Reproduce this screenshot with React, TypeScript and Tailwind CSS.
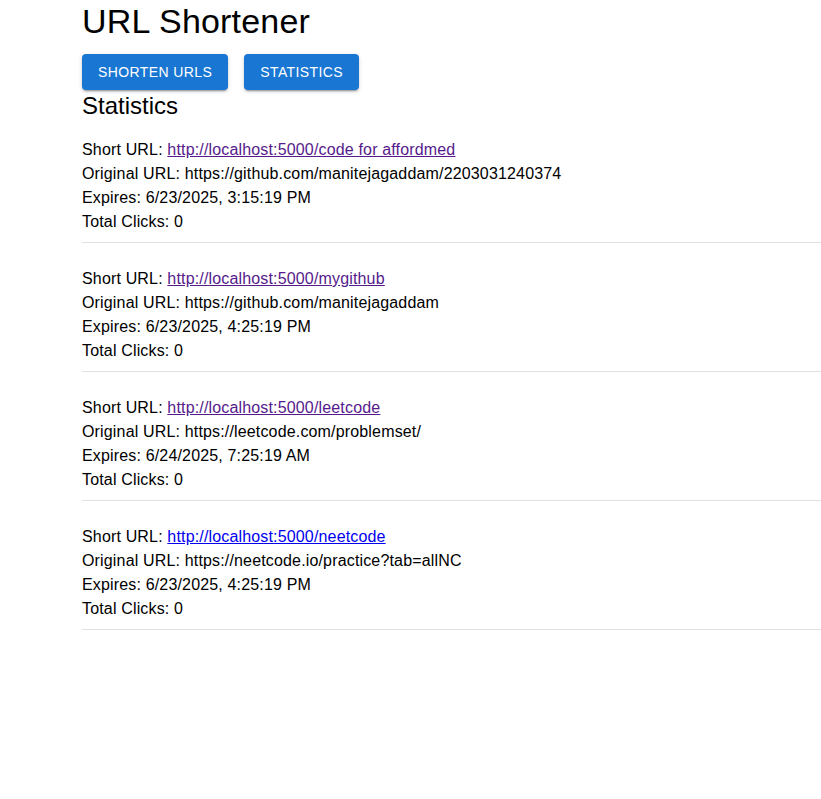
const urls = [
  {
    short: "http://localhost:5000/code for affordmed",
    original: "https://github.com/manitejagaddam/2203031240374",
    expires: "6/23/2025, 3:15:19 PM",
    clicks: 0,
    visited: true,
  },
  {
    short: "http://localhost:5000/mygithub",
    original: "https://github.com/manitejagaddam",
    expires: "6/23/2025, 4:25:19 PM",
    clicks: 0,
    visited: true,
  },
  {
    short: "http://localhost:5000/leetcode",
    original: "https://leetcode.com/problemset/",
    expires: "6/24/2025, 7:25:19 AM",
    clicks: 0,
    visited: true,
  },
  {
    short: "http://localhost:5000/neetcode",
    original: "https://neetcode.io/practice?tab=allNC",
    expires: "6/23/2025, 4:25:19 PM",
    clicks: 0,
    visited: false,
  },
];

const App = () => {
  return (
    <div className="min-h-[799px] bg-white pl-[82px] text-black font-['Liberation_Sans',Arial,sans-serif]">
      <h1 className="text-[34px] leading-[42px] font-normal tracking-[0.2px] mb-[12px]">URL Shortener</h1>

      <div className="flex gap-4">
        <button className="h-[36px] px-4 rounded bg-[#1976d2] text-white text-[14px] font-medium tracking-[0.4px] uppercase shadow-[0_3px_1px_-2px_rgba(0,0,0,0.2),0_2px_2px_0_rgba(0,0,0,0.14),0_1px_5px_0_rgba(0,0,0,0.12)]">
          Shorten URLs
        </button>
        <button className="h-[36px] px-4 rounded bg-[#1976d2] text-white text-[14px] font-medium tracking-[0.4px] uppercase shadow-[0_3px_1px_-2px_rgba(0,0,0,0.2),0_2px_2px_0_rgba(0,0,0,0.14),0_1px_5px_0_rgba(0,0,0,0.12)]">
          Statistics
        </button>
      </div>

      <h2 className="text-[24px] leading-[32px] font-normal">Statistics</h2>

      {/* List of shortened urls */}
      <ul>
        {urls.map((u, i) => (
          <li
            key={u.short}
            className={`${i === 0 ? "pt-[16px]" : "pt-[24px]"} pb-[8px] border-b border-[#e0e0e0] text-[16px] leading-[24px] tracking-[0.16px]`}
          >
            <div>
              Short URL:{" "}
              <a
                href="#"
                className={`underline ${u.visited ? "text-[#551a8b]" : "text-[#0000ee]"}`}
              >
                {u.short}
              </a>
            </div>
            <div>Original URL: {u.original}</div>
            <div>Expires: {u.expires}</div>
            <div>Total Clicks: {u.clicks}</div>
          </li>
        ))}
      </ul>
    </div>
  );
};

export default App;
